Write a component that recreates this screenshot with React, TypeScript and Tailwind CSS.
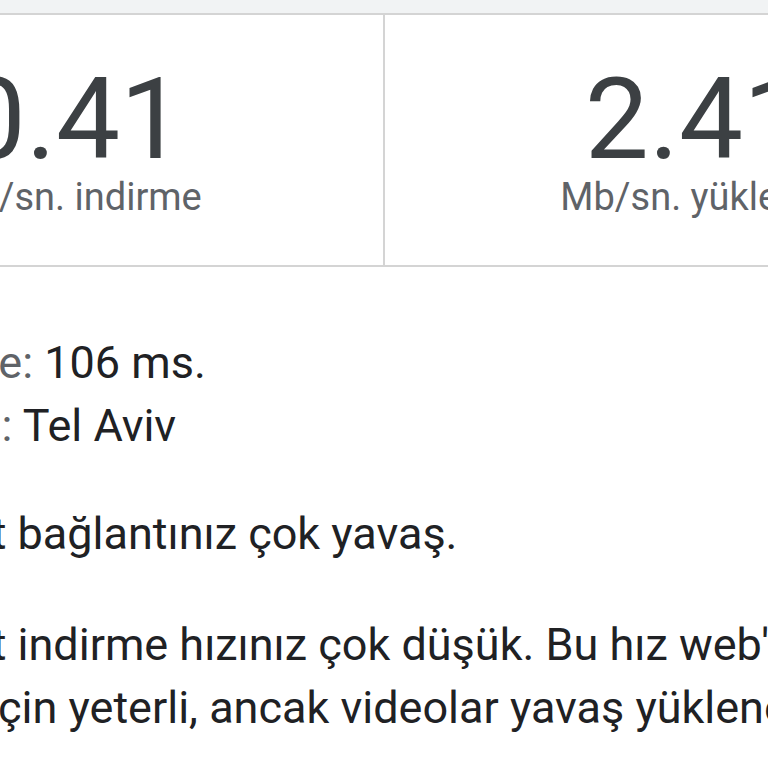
export default function App() {
  return (
    <div className="w-[768px] h-[768px] overflow-hidden bg-white font-['Roboto',sans-serif]">
      <div className="h-[13px] bg-[#f1f3f4]" />
      <div className="flex -ml-[237px] w-[1260px] border-y-2 border-[#d4d4d4] h-[254px]">
        <div className="w-[622px] shrink-0 border-r-2 border-[#d4d4d4] pt-[47px] flex flex-col items-center">
          <div className="text-[114px] leading-[114px] text-[#3c4043]">0.41</div>
          <div className="mt-[2px] text-[38px] leading-[38px] text-[#5f6368]">Mb/sn. indirme</div>
        </div>
        <div className="w-[622px] shrink-0 pt-[47px] flex flex-col items-center">
          <div className="text-[114px] leading-[114px] text-[#3c4043]">2.41</div>
          <div className="mt-[2px] text-[38px] leading-[38px] text-[#5f6368]">Mb/sn. yükleme</div>
        </div>
      </div>
      <div className="-ml-[148px] w-[1100px] pt-[64px] text-[45px] leading-[63px] text-[#202124] whitespace-nowrap">
        <div>
          <div className="-ml-[5px]">
            <span className="text-[#5f6368]">Gecikme: </span>106 ms.
          </div>
          <div>
            <span className="text-[#5f6368]">Sunucu: </span>Tel Aviv
          </div>
        </div>
        <div className="mt-[45px]">İnternet bağlantınız çok yavaş.</div>
        <div className="mt-[48px]">
          <div>İnternet indirme hızınız çok düşük. Bu hız web'de gezinmek</div>
          <div className="-ml-[9px]">gezinti için yeterli, ancak videolar yavaş yüklenebilir.</div>
        </div>
      </div>
    </div>
  );
}
